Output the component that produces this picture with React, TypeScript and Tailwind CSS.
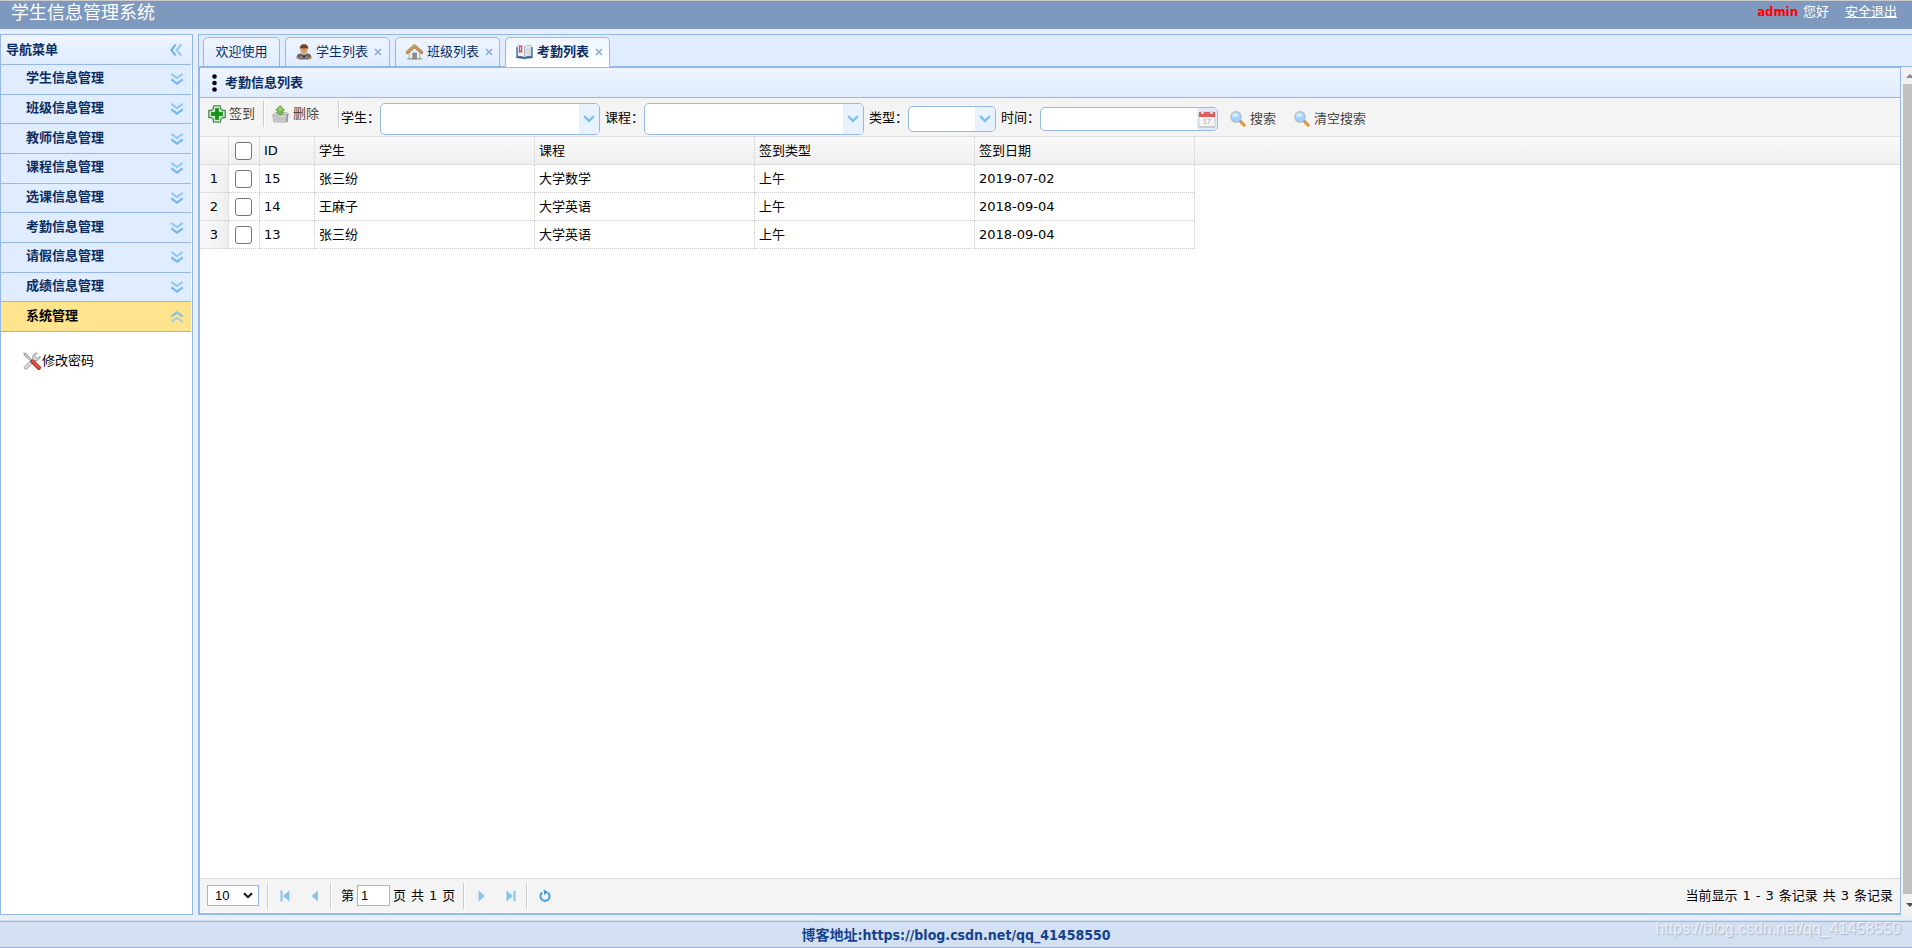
import React from "react";

const menu = [
  "学生信息管理",
  "班级信息管理",
  "教师信息管理",
  "课程信息管理",
  "选课信息管理",
  "考勤信息管理",
  "请假信息管理",
  "成绩信息管理",
  "系统管理",
];

const rows = [
  { id: "15", student: "张三纷", course: "大学数学", type: "上午", date: "2019-07-02" },
  { id: "14", student: "王麻子", course: "大学英语", type: "上午", date: "2018-09-04" },
  { id: "13", student: "张三纷", course: "大学英语", type: "上午", date: "2018-09-04" },
];

function DoubleChevron({ className = "" }: { className?: string }) {
  return (
    <svg viewBox="0 0 14 14" className={"h-3.5 w-3.5 " + className} fill="none" strokeWidth="2.2" aria-hidden="true">
      <path d="M1.3 1.8 L7 6.2 L12.7 1.8" stroke="#93cbf2" />
      <path d="M1.3 7.3 L7 11.7 L12.7 7.3" stroke="#74b8ef" />
    </svg>
  );
}

function UserIcon() {
  return (
    <svg viewBox="0 0 16 16" className="h-4 w-4" aria-hidden="true">
      <path d="M0.5 14 Q0.5 10 4 9.5 L12 9.5 Q15.5 10 15.5 14 Q15 15.6 8 15.6 Q1 15.6 0.5 14Z" fill="#666" />
      <path d="M1.2 13.5 L3.5 15 M14.8 13.5 L12.5 15" stroke="#d98f52" strokeWidth="1.6" />
      <path d="M4 12.8 Q8 15.5 12 12.8" stroke="#a5a5a8" strokeWidth="1" fill="none" />
      <path d="M5.5 9 L8 12.5 L10.5 9Z" fill="#d5d5d8" />
      <path d="M7.4 10.2h1.2l.5 3.8h-2.2z" fill="#3c3c40" />
      <rect x="4.5" y="2" width="7" height="7.6" rx="3" fill="#dc9d68" />
      <path d="M3.8 5.8 Q3.2 0.3 8 0.3 Q12.8 0.3 12.2 5.8 L11.2 4 Q8 4.8 4.8 4Z" fill="#6f4220" />
    </svg>
  );
}

function HouseIcon() {
  return (
    <svg viewBox="0 0 17 16" className="h-4 w-[17px]" aria-hidden="true">
      <path d="M1 14.6 Q4 12.6 8.5 13 Q14 12.6 16.4 14.6 L15.5 15.6 H1.6Z" fill="#8fae68" />
      <path d="M3.2 7.5 L8.5 3 L13.8 7.5 V14.6 H3.2Z" fill="#ececec" stroke="#9b9b98" strokeWidth="0.7" />
      <rect x="6.8" y="9" width="3.6" height="5.8" fill="#8b9299" stroke="#686c70" strokeWidth="0.6" />
      <path d="M1.4 8.4 L8.5 2 L15.6 8.4" fill="none" stroke="#a5743f" strokeWidth="3.2" strokeLinecap="round" strokeLinejoin="round" />
      <path d="M1.6 8 L8.5 1.9 L15.4 8" fill="none" stroke="#d3a468" strokeWidth="1.6" strokeLinecap="round" />
    </svg>
  );
}

function BookIcon() {
  return (
    <svg viewBox="0 0 17 16" className="h-4 w-[17px]" aria-hidden="true">
      <path d="M0.4 3 L8.5 4 L16.6 3 V14 L9.5 14.8 L8.5 15.6 L7.5 14.8 L0.4 14Z" fill="#255a92" />
      <path d="M1.8 1.2 Q6 0.6 8.5 2.6 V13.4 Q6 11.8 1.8 12.2Z" fill="#f1f3f5" stroke="#9aa3ad" strokeWidth="0.5" />
      <path d="M15.2 1.2 Q11 0.6 8.5 2.6 V13.4 Q11 11.8 15.2 12.2Z" fill="#dfe3e8" stroke="#9aa3ad" strokeWidth="0.5" />
      <path d="M3 1.8 h3.2 v7.4 l-1.6 -1.2 L3 9.2Z" fill="#e34a4a" />
      <path d="M4.5 3.2v3.2" stroke="#fff" strokeWidth="0.8" />
      <path d="M10 5h4M10 7h4M10 9h4" stroke="#c3c8ce" strokeWidth="0.7" />
    </svg>
  );
}

function PlusIcon() {
  return (
    <svg viewBox="0 0 18 18" className="h-[18px] w-[18px]" aria-hidden="true">
      <path d="M5.5 0.8 H12.5 V3.5 L14.5 5.5 H17.2 V12.5 H14.5 L12.5 14.5 V17.2 H5.5 V14.5 L3.5 12.5 H0.8 V5.5 H3.5 L5.5 3.5Z" fill="#eef8ee" stroke="#4b8a52" strokeWidth="1.3" strokeLinejoin="round" />
      <path d="M7 3 H11 V7 H15 V11 H11 V15 H7 V11 H3 V7 H7Z" fill="#149314" stroke="#62ba62" strokeWidth="0.5" />
    </svg>
  );
}

function BasketIcon() {
  return (
    <svg viewBox="0 0 17 18" className="h-[18px] w-[17px]" aria-hidden="true">
      <path d="M0.8 9.6 L3.5 7.6 H13.5 L16.2 8.4 L15.2 17 H1.8Z" fill="#e2e2e2" stroke="#999" strokeWidth="0.7" />
      <path d="M0.6 9.8 L16.4 8.8 V10.4 L0.6 11.4Z" fill="#b9b9b9" />
      <path d="M2 12.8h13M2 14.8h13M4 11.5v5M6 11.5v5M8 11.5v5M10 11.5v5M12 11.5v5M14 11v5.5" stroke="#a9a9a9" strokeWidth="0.6" />
      <path d="M15.4 9.5 L14.6 17" stroke="#858585" strokeWidth="1" />
      <path d="M8 0.6 L12.6 5 L11 6 V8.8 Q8 10.4 5.4 8.8 V6 L3.8 5Z" fill="#79b94f" stroke="#5a9e3e" strokeWidth="0.7" strokeLinejoin="round" />
      <path d="M7.6 2 L10 4.6 L7 6.2Z" fill="#b4dc8c" />
    </svg>
  );
}

function SearchIcon() {
  return (
    <svg viewBox="0 0 16 16" className="h-4 w-4" aria-hidden="true">
      <path d="M10.2 10.2 L14 14" stroke="#e8973b" strokeWidth="3.2" strokeLinecap="round" />
      <path d="M8.9 8.9 L10.6 10.6" stroke="#7a7a7a" strokeWidth="1.6" />
      <circle cx="6" cy="6" r="5.2" fill="#9fd1fa" stroke="#b4c0cc" strokeWidth="1.4" />
      <ellipse cx="5.4" cy="4.2" rx="3.2" ry="2.1" fill="#cfe8fd" />
    </svg>
  );
}

function CalendarIcon() {
  return (
    <svg viewBox="0 0 18 18" className="h-[18px] w-[18px]" aria-hidden="true">
      <rect x="1" y="2" width="16" height="15.5" rx="1" fill="#f4f4f4" stroke="#cdcdcd" strokeWidth="0.8" />
      <rect x="1" y="2" width="16" height="5" fill="#e05c5c" />
      <rect x="3" y="0.5" width="3" height="3.6" rx="1" fill="#dadada" />
      <rect x="12" y="0.5" width="3" height="3.6" rx="1" fill="#dadada" />
      <path d="M1 16.8h16" stroke="#b9b9b9" strokeWidth="1" />
      <text x="9" y="14" fontSize="7" textAnchor="middle" fill="#a6a6a6" fontFamily="Liberation Sans, sans-serif">17</text>
    </svg>
  );
}

function ToolsIcon() {
  return (
    <svg viewBox="0 0 18 18" className="h-[18px] w-[18px]" aria-hidden="true">
      <path d="M13 1 a4 4 0 0 0 -3 5.4 L1.6 14.6 a1.6 1.6 0 0 0 2.2 2.3 L12 8.4 a4 4 0 0 0 5.2 -4.2 L14.8 6.2 L12.4 5.6 L12 3.4 L14.2 1.2Z" fill="#dcdcdc" stroke="#8e8e8e" strokeWidth="0.8" />
      <path d="M0.8 0.8 L3.6 1.8 L9 8 L7.8 9.2 L1.6 3.8Z" fill="#c9c9c9" stroke="#858585" strokeWidth="0.7" />
      <path d="M9.6 9.6 L15.8 15.8" stroke="#a82a20" strokeWidth="4.2" strokeLinecap="round" />
      <path d="M9.8 9.4 L15.8 15.4" stroke="#e55442" strokeWidth="2.4" strokeLinecap="round" />
    </svg>
  );
}

function Combo({ label, id, size }: { label: string; id: string; size: string }) {
  return (
    <div className="flex items-center">
      <label htmlFor={id} className="pb-0.5">{label}</label>
      <div className={"relative flex overflow-hidden rounded-[5px] border border-[#95b8e7] bg-white " + size}>
        <select id={id} className="h-full w-full appearance-none bg-transparent px-1 outline-none">
          <option value=""></option>
        </select>
        <span className="pointer-events-none absolute inset-y-0 right-0 flex w-5 items-center justify-center bg-[#e8f2fe]">
          <svg viewBox="0 0 12 8" className="h-2 w-3" fill="none" aria-hidden="true">
            <path d="M1.2 1.2 L6 6 L10.8 1.2" stroke="#7cc0f2" strokeWidth="2.4" />
          </svg>
        </span>
      </div>
    </div>
  );
}

function Tab({ icon, text, active = false }: { icon?: React.ReactNode; text: string; active?: boolean }) {
  return (
    <div
      className={
        "flex h-[30px] shrink-0 items-center rounded-t-[5px] border border-[#95b8e7] " +
        (active ? "border-b-white bg-linear-to-b from-[#eff5ff] to-white font-bold " : "bg-linear-to-b from-[#eff5ff] to-[#e0ecff] ") +
        (icon ? "w-[105px] pl-2.5" : "w-[77px] justify-center")
      }
    >
      {icon}
      <a href="#" className={icon ? "pl-1" : ""}>{text}</a>
      {icon && (
        <button type="button" aria-label="关闭" className="ml-1.5">
          <svg viewBox="0 0 8 8" className="h-2 w-2" aria-hidden="true">
            <path d="M1 1 L7 7 M7 1 L1 7" stroke="#88abdc" strokeWidth="1.6" />
          </svg>
        </button>
      )}
    </div>
  );
}

function Separator() {
  return <span className="h-[26px] w-0.5 shrink-0 border-l border-r border-l-[#ccc] border-r-white" />;
}

function PageButton({ label, d }: { label: string; d: string }) {
  return (
    <button type="button" aria-label={label} className="flex h-[26px] w-[30px] items-center justify-center">
      <svg viewBox="0 0 10 12" className="h-3 w-2.5" fill="#88c4ee" aria-hidden="true">
        <path d={d} />
      </svg>
    </button>
  );
}

function Check({ label }: { label: string }) {
  return (
    <input
      type="checkbox"
      aria-label={label}
      className="ml-0.5 block h-[18px] w-[17px] appearance-none rounded-[3px] border border-[#767676] bg-white checked:bg-[#0075ff]"
    />
  );
}

export default function App() {
  const cell = "border-r border-b border-dotted border-[#ccc] px-1";
  const head = "border-r border-dotted border-r-[#ccc] px-1 text-left font-normal";
  return (
    <div
      lang="zh-CN"
      className="flex h-screen flex-col overflow-hidden bg-[#e6eef8] font-['DejaVu_Sans','Noto_Sans_CJK_SC',sans-serif] text-[13px] leading-4 text-black"
    >
      <header className="flex h-[29px] shrink-0 items-start justify-between border-t border-[#ccc] bg-[#7f99be] pl-[11px] pr-[15px] text-white">
        <h1 className="text-[18px] leading-[23px]">学生信息管理系统</h1>
        <div className="flex gap-4 pt-[3px] font-['DejaVu_Sans_Condensed','Noto_Sans_CJK_SC',sans-serif]">
          <span className="flex gap-[5px]">
            <b className="text-[#ff0000]">admin</b>
            <span>您好</span>
          </span>
          <a href="#" className="underline">安全退出</a>
        </div>
      </header>

      <div className="flex min-h-0 flex-1 gap-[5px] pt-[5px] pb-[5px]">
        <aside className="flex w-[193px] shrink-0 flex-col border border-[#95b8e7] bg-white text-[#0e2d5f]">
          <div className="flex h-[29px] shrink-0 items-center justify-between bg-linear-to-b from-[#eff5ff] to-[#e0ecff] pl-[5px] pr-[9px] font-bold">
            导航菜单
            <button type="button" aria-label="收起">
              <DoubleChevron className="rotate-90" />
            </button>
          </div>
          <nav className="mr-px grid h-[268px] shrink-0 grid-rows-9 border-b border-[#95b8e7]">
            {menu.map((m, i) => (
              <a
                href="#"
                key={m}
                className={
                  "flex items-center justify-between border-t border-[#95b8e7] pl-[25px] pr-[7px] font-bold " +
                  (i === 8 ? "bg-[#ffe48d] text-black" : "bg-[#e0ecff]")
                }
              >
                <span className="pb-0.5">{m}</span>
                <DoubleChevron className={i === 8 ? "rotate-180 opacity-80" : ""} />
              </a>
            ))}
          </nav>
          <a href="#" className="mt-5 flex items-center gap-px pl-[22px] text-black">
            <ToolsIcon />
            <span>修改密码</span>
          </a>
        </aside>

        <main className="flex min-w-0 flex-1 flex-col border-l border-[#95b8e7]">
          <div className="flex h-[33px] shrink-0 items-end border-t border-b border-[#95b8e7] bg-[#e0ecff] pl-1 text-[#0e2d5f]">
            <div className="-mb-px flex gap-[5px]">
              <Tab text="欢迎使用" />
              <Tab text="学生列表" icon={<UserIcon />} />
              <Tab text="班级列表" icon={<HouseIcon />} />
              <Tab text="考勤列表" icon={<BookIcon />} active />
            </div>
          </div>
          <div className="flex min-h-0 flex-1">
            <section className="flex min-w-0 flex-1 flex-col border border-[#95b8e7] border-b-2 bg-white">
              <div className="flex h-[30px] shrink-0 items-center gap-2 border-b border-[#95b8e7] bg-linear-to-b from-[#eff5ff] to-[#e0ecff] pl-3 font-bold text-[#0e2d5f]">
                <svg viewBox="0 0 5 18" className="h-[18px] w-[5px]" aria-hidden="true">
                  <circle cx="2.5" cy="2.5" r="2.3" />
                  <circle cx="2.5" cy="9" r="2.3" />
                  <circle cx="2.5" cy="15.5" r="2.3" />
                </svg>
                <h2>考勤信息列表</h2>
              </div>

              <div className="flex h-[39px] shrink-0 items-center whitespace-nowrap border-b border-[#ddd] bg-[#f4f4f4] pt-[3px] pl-2">
                <div className="flex h-[26px] items-center self-start text-[#444]">
                  <button type="button" className="flex items-center gap-[3px] pr-2">
                    <PlusIcon />
                    <span>签到</span>
                  </button>
                  <Separator />
                  <button type="button" className="flex items-center gap-1 pl-[7px] pr-[19px]">
                    <BasketIcon />
                    <span>删除</span>
                  </button>
                  <Separator />
                </div>
                <div className="flex items-center gap-[5px] pl-px">
                  <Combo id="student" label="学生：" size="h-8 w-[220px]" />
                  <Combo id="course" label="课程：" size="h-8 w-[220px]" />
                  <Combo id="type" label="类型：" size="h-[26px] w-[88px]" />
                  <div className="flex items-center">
                    <label htmlFor="time" className="pb-0.5">时间：</label>
                    <div className="flex h-6 w-[178px] overflow-hidden rounded-[5px] border border-[#95b8e7] bg-white">
                      <input id="time" type="text" className="min-w-0 flex-1 px-1 outline-none" />
                      <button type="button" aria-label="选择日期" className="flex w-5 items-center justify-center bg-[#e0ecff]">
                        <CalendarIcon />
                      </button>
                    </div>
                  </div>
                </div>
                <div className="flex items-center gap-[18px] pl-3 text-[#444]">
                  <button type="button" className="flex items-center gap-1">
                    <SearchIcon />
                    搜索
                  </button>
                  <button type="button" className="flex items-center gap-1">
                    <SearchIcon />
                    清空搜索
                  </button>
                </div>
              </div>

              <div className="min-h-0 flex-1">
                <table className="w-full table-fixed border-separate border-spacing-0">
                  <colgroup>
                    <col className="w-[29px]" />
                    <col className="w-[31px]" />
                    <col className="w-[55px]" />
                    <col className="w-[220px]" />
                    <col className="w-[220px]" />
                    <col className="w-[220px]" />
                    <col className="w-[220px]" />
                    <col />
                  </colgroup>
                  <thead>
                    <tr className="h-7 bg-linear-to-b from-[#f9f9f9] to-[#efefef] *:border-b *:border-b-[#ddd] *:[border-bottom-style:solid]">
                      <th className={head}></th>
                      <th className={head}><Check label="全选" /></th>
                      <th className={head}>ID</th>
                      <th className={head}>学生</th>
                      <th className={head}>课程</th>
                      <th className={head}>签到类型</th>
                      <th className={head}>签到日期</th>
                      <th></th>
                    </tr>
                  </thead>
                  <tbody>
                    {rows.map((r, i) => (
                      <tr key={r.id} className="h-7">
                        <td className="border-r border-b border-dotted border-[#ccc] bg-linear-to-r from-[#f9f9f9] to-[#efefef] text-center">{i + 1}</td>
                        <td className={cell}><Check label={"选择 " + r.id} /></td>
                        <td className={cell}>{r.id}</td>
                        <td className={cell}>{r.student}</td>
                        <td className={cell}>{r.course}</td>
                        <td className={cell}>{r.type}</td>
                        <td className={cell}>{r.date}</td>
                        <td></td>
                      </tr>
                    ))}
                  </tbody>
                </table>
              </div>

              <div className="mb-px flex h-[34px] shrink-0 items-center justify-between whitespace-nowrap border-t border-[#ddd] bg-[#f4f4f4] px-[7px]">
                <div className="flex items-center">
                  <span className="relative mr-2 flex">
                    <select
                      aria-label="每页记录数"
                      className="h-[21px] w-[52px] appearance-none border border-[#95b8e7] bg-white pl-[7px] font-['Liberation_Sans',sans-serif] leading-4"
                    >
                      <option>10</option>
                      <option>20</option>
                      <option>50</option>
                    </select>
                    <svg viewBox="0 0 10 7" className="pointer-events-none absolute right-1.5 top-[7px] h-[7px] w-2.5" fill="none" aria-hidden="true">
                      <path d="M1 1.2 L5 5.2 L9 1.2" stroke="#111" strokeWidth="2" />
                    </svg>
                  </span>
                  <Separator />
                  <div className="flex pl-px">
                    <PageButton label="首页" d="M0.5 0.5h2v11h-2z M9.5 0.5v11L3 6z" />
                    <PageButton label="上一页" d="M8 0.5v11L1.5 6z" />
                  </div>
                  <Separator />
                  <label htmlFor="page" className="pl-[9px] pr-[3px]">第</label>
                  <input
                    id="page"
                    type="text"
                    defaultValue="1"
                    className="h-[21px] w-[33px] border border-[#95b8e7] bg-white px-[3px] font-['Liberation_Sans',sans-serif]"
                  />
                  <span className="flex gap-[5px] pl-[3px] pr-2">
                    <span>页</span>
                    <span>共</span>
                    <span>1</span>
                    <span>页</span>
                  </span>
                  <Separator />
                  <div className="flex pl-px">
                    <PageButton label="下一页" d="M2.5 0.5v11L9 6z" />
                    <PageButton label="末页" d="M7.5 0.5h2v11h-2z M0.5 0.5v11L7 6z" />
                  </div>
                  <Separator />
                  <button type="button" aria-label="刷新" className="flex h-[26px] w-[34px] items-center justify-center">
                    <svg viewBox="0 0 14 14" className="h-3.5 w-3.5" fill="none" aria-hidden="true">
                      <path d="M4.2 3.6 A4.6 4.6 0 1 0 9.8 3.6" stroke="#4aa3e0" strokeWidth="2.1" />
                      <path d="M5.6 0.4 L10 3 L6.2 6Z" fill="#3a97da" />
                    </svg>
                  </button>
                </div>
                <p className="flex gap-[5px]">
                  <span>当前显示</span>
                  <span>1</span>
                  <span>-</span>
                  <span>3</span>
                  <span>条记录</span>
                  <span>共</span>
                  <span>3</span>
                  <span>条记录</span>
                </p>
              </div>
            </section>

            <div className="flex w-[11px] shrink-0 flex-col items-end bg-[#f1f1f1]">
              <svg viewBox="0 0 9 17" className="h-[17px] w-[9px]" aria-hidden="true">
                <path d="M3 11 L7 7 L9 9 V11Z" fill="#8b8b8b" />
              </svg>
              <div className="w-[9px] flex-1 bg-[#c1c1c1]" />
              <svg viewBox="0 0 9 21" className="h-[21px] w-[9px]" aria-hidden="true">
                <path d="M3 9 H9 V11 L7 13Z" fill="#505050" />
              </svg>
            </div>
          </div>
        </main>
      </div>

      <footer className="relative flex h-7 shrink-0 flex-col border-t border-[#d2e0f2]">
        <div className="flex flex-1 items-center justify-center border-t border-b border-[#95b8e7] bg-[#d2e0f2] font-['DejaVu_Sans_Condensed','Noto_Sans_CJK_SC',sans-serif] text-[14px] font-bold text-[#15428b]">
          博客地址:https://blog.csdn.net/qq_41458550
        </div>
        <span className="absolute top-0 right-[11px] font-['Liberation_Sans',sans-serif] text-[16px] text-white/65 [text-shadow:1px_1px_1px_rgba(120,130,150,0.45)]">
          https://blog.csdn.net/qq_41458550
        </span>
      </footer>
    </div>
  );
}
